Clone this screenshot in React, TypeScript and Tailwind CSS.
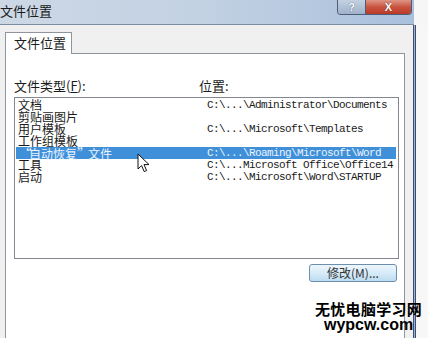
const rows = [
  { name: "文档", path: "C:\\...\\Administrator\\Documents" },
  { name: "剪贴画图片", path: "" },
  { name: "用户模板", path: "C:\\...\\Microsoft\\Templates" },
  { name: "工作组模板", path: "" },
  { name: "“自动恢复”文件", path: "C:\\...\\Roaming\\Microsoft\\Word", selected: true },
  { name: "工具", path: "C:\\...Microsoft Office\\Office14" },
  { name: "启动", path: "C:\\...\\Microsoft\\Word\\STARTUP" },
]

const cjk = { fontFamily: '"Noto Sans CJK SC", "Noto Sans", sans-serif' }
const mono = { fontFamily: '"Liberation Mono", "Noto Sans CJK SC", monospace' }

// full-width quotes like the SimSun rendering
function Name({ text }: { text: string }) {
  const parts = text.split(/([“”])/).filter(Boolean)
  return (
    <>
      {parts.map((p, i) =>
        p === "“" || p === "”" ? (
          <span key={i} className="inline-block w-[11px] text-center text-[14px]">
            {p}
          </span>
        ) : (
          p
        ),
      )}
    </>
  )
}

function Cursor() {
  return (
    <svg width="14" height="20" viewBox="0 0 14 20" className="absolute left-[137px] top-[153px]">
      <path
        d="M1 1 L1 16 L4.6 12.6 L7.2 18.6 L9.6 17.6 L7 11.6 L12 11.6 Z"
        fill="#fff"
        stroke="#111"
        strokeWidth="1"
        strokeLinejoin="round"
      />
    </svg>
  )
}

export default function App() {
  return (
    <div className="relative w-[428px] h-[338px] overflow-hidden bg-[#f6f6f6] flex flex-col" style={cjk}>
      {/* Title bar */}
      <div className="w-[414px] h-[24px] shrink-0 flex items-start justify-between bg-gradient-to-r from-[#cdd8e5] via-[#c2d1e3] to-[#a9c0dc]">
        <span className="text-[13px] leading-[22px] text-[#1a1a1a]">文件位置</span>
        <div className="flex h-[15px] mr-[2px] border border-t-0 border-[#4d5d78] rounded-b-[4px] overflow-hidden">
          <div className="w-[28px] flex items-center justify-center bg-gradient-to-b from-[#c4d1e2] to-[#9fb2ca] border-r border-[#4d5d78]">
            <span className="text-[11px] font-bold leading-none text-white [text-shadow:0_0_1px_#2b3a55]" style={{ fontFamily: '"Liberation Sans", sans-serif' }}>
              ?
            </span>
          </div>
          <div className="w-[45px] flex items-center justify-center bg-gradient-to-b from-[#dc9486] via-[#c9533f] to-[#b93a27]">
            <span className="text-[11px] font-bold leading-none text-white [text-shadow:0_0_1px_#5a1a10]" style={{ fontFamily: '"Liberation Sans", sans-serif' }}>
              X
            </span>
          </div>
        </div>
      </div>
      <div className="w-[414px] h-px bg-[#7d8ca3] shrink-0" />

      {/* Body */}
      <div className="flex flex-1 min-h-0">
        <div className="w-[413px] bg-[#f0f0f0] flex flex-col pl-[5px] pr-[8px] pt-[7px]">
          <div className="relative z-10 -mb-px w-[67px] h-[22px] bg-white border border-b-0 border-[#8e959f] pl-[8px] text-[13px] leading-[20px] text-[#1a1a1a]">
            文件位置
          </div>
          <div className="flex-1 bg-white border border-b-0 border-[#8e959f] pl-[8px] pt-[24px]">
            <div className="flex text-[13px] leading-[16px] text-[#1a1a1a]">
              <span className="w-[185px]">
                文件类型(<span className="underline">F</span>):
              </span>
              <span>位置:</span>
            </div>
            <div className="mt-[3px] w-[385px] h-[162px] border border-[#828790] pt-[1px] px-px">
              {rows.map((r) => (
                <div
                  key={r.name}
                  className={`flex h-[12px] leading-[12px] mr-[1px] ${r.selected ? "bg-[#3f8fd9] text-[#eaf4ff]" : "text-[#1a1a1a]"}`}
                >
                  <span className="w-[191px] pl-[2px] text-[12px] whitespace-nowrap">
                    <Name text={r.name} />
                  </span>
                  <span className="text-[11px] tracking-[-0.6px] whitespace-nowrap" style={mono}>
                    {r.path}
                  </span>
                </div>
              ))}
            </div>
            <div className="w-[385px] flex justify-end mt-[5px]">
              <button className="mr-[2px] w-[88px] h-[18px] rounded-[3px] border border-[#6d8fae] bg-gradient-to-b from-[#eef6fc] via-[#d7ebf8] to-[#bcdcf1] text-[12px] leading-[16px] text-[#333]">
                修改(M)...
              </button>
            </div>
          </div>
        </div>
        <div className="w-[3px] bg-[#9eb2cf] border-x border-[#3d4e72]" />
        <div className="flex-1 bg-[#f7f7f7]" />
      </div>

      <Cursor />

      {/* Watermark */}
      <div className="absolute left-[315px] top-[300px] flex flex-col items-center text-black font-bold">
        <span className="text-[15px] leading-[17px] tracking-[0.3px]">无忧电脑学习网</span>
        <span className="text-[16px] leading-[15px]" style={{ fontFamily: '"Liberation Sans", sans-serif' }}>
          wypcw.com
        </span>
      </div>
    </div>
  )
}
